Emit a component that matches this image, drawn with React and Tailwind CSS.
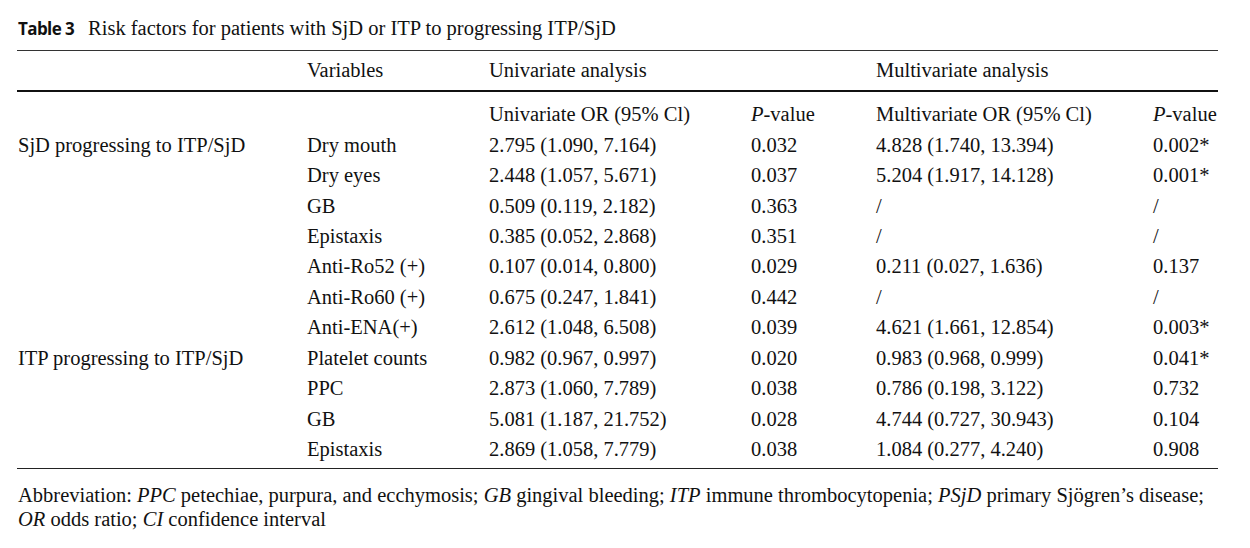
import React from "react";

const rows = [
  ["SjD progressing to ITP/SjD", "Dry mouth", "2.795 (1.090, 7.164)", "0.032", "4.828 (1.740, 13.394)", "0.002*"],
  ["", "Dry eyes", "2.448 (1.057, 5.671)", "0.037", "5.204 (1.917, 14.128)", "0.001*"],
  ["", "GB", "0.509 (0.119, 2.182)", "0.363", "/", "/"],
  ["", "Epistaxis", "0.385 (0.052, 2.868)", "0.351", "/", "/"],
  ["", "Anti-Ro52 (+)", "0.107 (0.014, 0.800)", "0.029", "0.211 (0.027, 1.636)", "0.137"],
  ["", "Anti-Ro60 (+)", "0.675 (0.247, 1.841)", "0.442", "/", "/"],
  ["", "Anti-ENA(+)", "2.612 (1.048, 6.508)", "0.039", "4.621 (1.661, 12.854)", "0.003*"],
  ["ITP progressing to ITP/SjD", "Platelet counts", "0.982 (0.967, 0.997)", "0.020", "0.983 (0.968, 0.999)", "0.041*"],
  ["", "PPC", "2.873 (1.060, 7.789)", "0.038", "0.786 (0.198, 3.122)", "0.732"],
  ["", "GB", "5.081 (1.187, 21.752)", "0.028", "4.744 (0.727, 30.943)", "0.104"],
  ["", "Epistaxis", "2.869 (1.058, 7.779)", "0.038", "1.084 (0.277, 4.240)", "0.908"],
];

const cols = "grid grid-cols-[290px_182px_262px_125px_277px_64px]";

export default function App() {
  return (
    <div className="w-[1250px] h-[548px] bg-white text-[#111] font-['Liberation_Serif','Times_New_Roman',serif] text-[20.5px] pl-[17px] pt-[16px]">
      <div className="flex items-baseline h-[24px] leading-[24px]">
        <span className="font-['Open_Sans',sans-serif] font-bold text-[17px] tracking-[-0.6px] pl-[1px]">Table 3</span>
        <span className="ml-[14px]">Risk factors for patients with SjD or ITP to progressing ITP/SjD</span>
      </div>
      <div className="w-[1201px] mt-[10px] border-t border-[#333]">
        <div className={`${cols} h-[39px] items-center leading-[24px] pb-[2px]`}>
          <div />
          <div>Variables</div>
          <div className="col-span-2">Univariate analysis</div>
          <div className="col-span-2">Multivariate analysis</div>
        </div>
        <div className="border-t-2 border-[#111]" />
        <div className="pt-[7px] pb-[4px] leading-[24px]">
          <div className={`${cols} h-[30.45px] items-center`}>
            <div />
            <div />
            <div>Univariate OR (95% Cl)</div>
            <div><i>P</i>-value</div>
            <div>Multivariate OR (95% Cl)</div>
            <div><i>P</i>-value</div>
          </div>
          {rows.map((r, i) => (
            <div key={i} className={`${cols} h-[30.45px] items-center`}>
              {r.map((c, j) => (
                <div key={j} className={j === 0 ? "pl-[1px] whitespace-nowrap" : "whitespace-nowrap"}>{c}</div>
              ))}
            </div>
          ))}
        </div>
        <div className="border-t border-[#222]" />
      </div>
      <div className="pt-[14px] leading-[24px] pl-[1px]">
        <div className="whitespace-nowrap">
          Abbreviation: <i>PPC</i> petechiae, purpura, and ecchymosis; <i>GB</i> gingival bleeding; <i>ITP</i> immune thrombocytopenia; <i>PSjD</i> primary Sjögren’s disease;
        </div>
        <div>
          <i>OR</i> odds ratio; <i>CI</i> confidence interval
        </div>
      </div>
    </div>
  );
}
